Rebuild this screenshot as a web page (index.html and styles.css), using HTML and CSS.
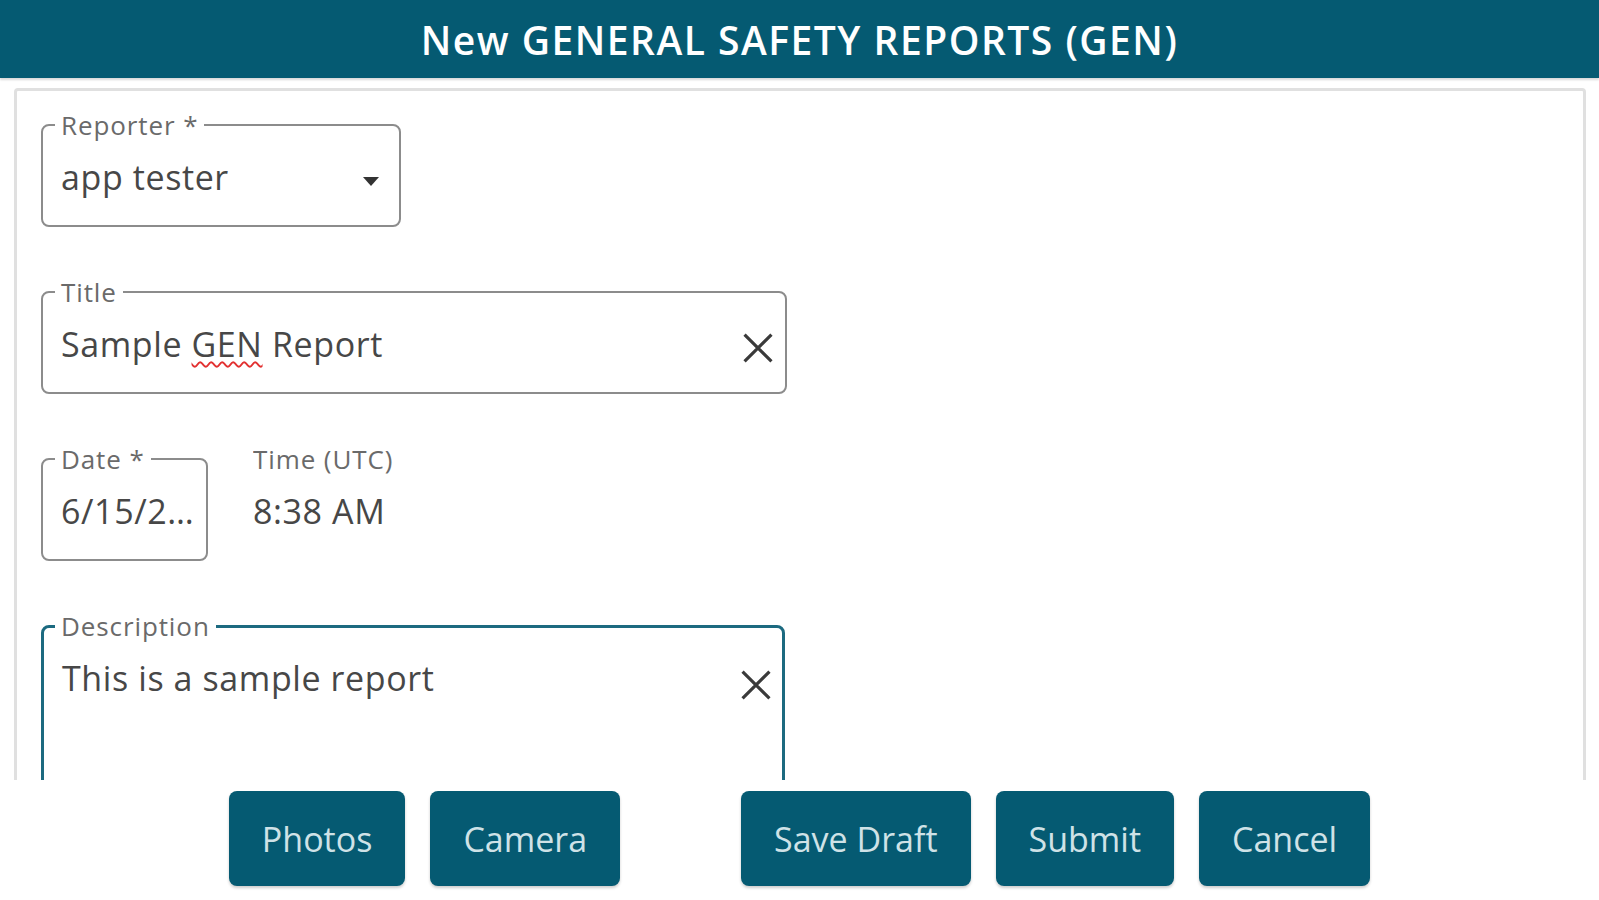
FILE: index.html
```html
<html>
  <head>
    <link rel="stylesheet" href="styles.css">
  </head>
  <body>
    <header class="topbar">
      <h1 class="topbar-title">New GENERAL SAFETY REPORTS (GEN)</h1>
    </header>

    <main class="scroll-area">
      <div class="card">
        <fieldset class="field field-reporter">
          <legend>Reporter *</legend>
          <div class="value">
            <span>app tester</span>
            <span class="caret"></span>
          </div>
        </fieldset>

        <fieldset class="field field-title">
          <legend>Title</legend>
          <div class="value">
            <span>Sample <span class="misspelled">GEN</span> Report</span>
            <svg class="clear-icon" viewBox="0 0 24 24" width="38" height="38">
              <path d="M3.5 3.5 L20.5 20.5 M20.5 3.5 L3.5 20.5" stroke="#3a3a3a" stroke-width="2" fill="none"/>
            </svg>
          </div>
        </fieldset>

        <div class="date-row">
          <fieldset class="field field-date">
            <legend>Date *</legend>
            <div class="value"><span class="ellipsis">6/15/2024</span></div>
          </fieldset>
          <div class="time-block">
            <div class="time-label">Time (UTC)</div>
            <div class="time-value">8:38 AM</div>
          </div>
        </div>

        <fieldset class="field field-desc">
          <legend>Description</legend>
          <div class="value value-top">
            <span>This is a sample report</span>
            <svg class="clear-icon" viewBox="0 0 24 24" width="38" height="38">
              <path d="M3.5 3.5 L20.5 20.5 M20.5 3.5 L3.5 20.5" stroke="#3a3a3a" stroke-width="2" fill="none"/>
            </svg>
          </div>
        </fieldset>
      </div>
    </main>

    <footer class="actions">
      <div class="btn-group">
        <button class="btn">Photos</button>
        <button class="btn">Camera</button>
      </div>
      <div class="btn-group">
        <button class="btn">Save Draft</button>
        <button class="btn">Submit</button>
        <button class="btn">Cancel</button>
      </div>
    </footer>
  </body>
</html>
```

FILE: styles.css
```css
body {
  margin: 0;
  background: #fff;
  font-family: "Open Sans", sans-serif;
  color: #484848;
  width: 1599px;
  height: 900px;
  overflow: hidden;
}

.topbar {
  height: 78px;
  background-color: #055a72;
  display: flex;
  align-items: center;
  justify-content: center;
  box-shadow: 0 2px 2px rgba(0, 0, 0, 0.15);
}

.topbar-title {
  margin: 0;
  color: #fff;
  font-size: 39px;
  font-weight: 600;
  letter-spacing: 1.5px;
}

.scroll-area {
  height: 702px;
  overflow: hidden;
  padding: 10px 0 0 14px;
  box-sizing: border-box;
}

.card {
  width: 1572px;
  height: 900px;
  box-sizing: border-box;
  border: 3px solid #e0e0e0;
  border-radius: 4px;
  padding: 20px 0 0 24px;
}

.field {
  margin: 0 0 51px 0;
  padding: 0 20px 0 18px;
  border: 2px solid #8c8c8c;
  border-radius: 8px;
  box-sizing: border-box;
  min-width: 0;
}

.field legend {
  margin-left: -6px;
  padding: 0 6px;
  font-size: 26px;
  line-height: 28px;
  letter-spacing: 0.9px;
  color: #6a6a6a;
}

.value {
  display: flex;
  align-items: center;
  justify-content: space-between;
  height: 40px;
  padding: 18px 0 28px;
  font-size: 34px;
  letter-spacing: 0.6px;
  color: #474747;
}

.field-reporter { width: 360px; }
.field-title { width: 746px; padding-right: 8px; }
.field-date { width: 167px; margin-bottom: 0; padding-right: 6px; }

.field-desc {
  width: 744px;
  height: 240px;
  border: 3px solid #1c6a80;
  padding-right: 7px;
}

.field-desc legend { margin-left: -7px; }

.value-top {
  align-items: flex-start;
  padding-top: 15px;
}

.value-top .clear-icon { margin-top: 11px; }

.caret {
  width: 0;
  height: 0;
  border-left: 8px solid transparent;
  border-right: 8px solid transparent;
  border-top: 9px solid #333;
  margin: 8px 0 0 0;
}

.clear-icon {
  display: block;
  margin-top: 7px;
}

.misspelled {
  text-decoration: underline wavy #e23030;
  text-decoration-thickness: 2px;
  text-underline-offset: 4px;
}

.ellipsis {
  display: block;
  width: 100%;
  overflow: hidden;
  white-space: nowrap;
  text-overflow: ellipsis;
}

.date-row {
  display: flex;
  gap: 45px;
  margin-bottom: 51px;
}

.time-block {
  width: 140px;
  overflow: hidden;
  white-space: nowrap;
}

.time-label {
  font-size: 26px;
  line-height: 28px;
  letter-spacing: 0.9px;
  color: #6a6a6a;
}

.time-value {
  margin-top: 18px;
  font-size: 34px;
  line-height: 40px;
  letter-spacing: 0.6px;
  color: #474747;
}

.actions {
  height: 120px;
  box-sizing: border-box;
  padding-top: 11px;
  display: flex;
  justify-content: center;
  align-items: flex-start;
  gap: 121px;
}

.btn-group {
  display: flex;
  gap: 25px;
}

.btn {
  height: 95px;
  padding: 0 33px;
  border: none;
  border-radius: 8px;
  background-color: #055a72;
  color: #cfe2e7;
  font-family: "Open Sans", sans-serif;
  font-size: 34px;
  box-shadow: 0 2px 3px rgba(0, 0, 0, 0.2);
}
```
